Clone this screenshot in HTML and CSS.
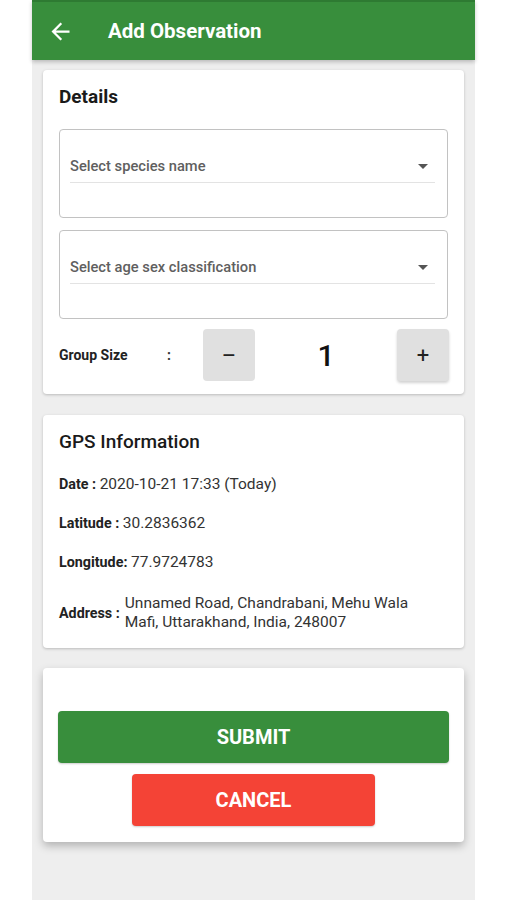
FILE: index.html
```html
<!DOCTYPE html>
<html lang="en">
<head>
<meta charset="utf-8">
<title>Add Observation</title>
<link rel="stylesheet" href="styles.css">
</head>
<body>
<div class="app">
  <header class="toolbar">
    <svg class="back" viewBox="0 0 24 24" width="27" height="27"><path fill="#fff" d="M20 11H7.83l5.59-5.59L12 4l-8 8 8 8 1.41-1.41L7.83 13H20v-2z"/></svg>
    <h1 class="title">Add Observation</h1>
  </header>
  <main class="content">
    <section class="card details">
      <h2 class="card-title">Details</h2>
      <div class="dropdown">
        <div class="select-row">
          <span class="placeholder">Select species name</span>
          <span class="caret"></span>
        </div>
      </div>
      <div class="dropdown second">
        <div class="select-row">
          <span class="placeholder">Select age sex classification</span>
          <span class="caret"></span>
        </div>
      </div>
      <div class="group-row">
        <span class="group-label">Group Size</span>
        <span class="group-colon">:</span>
        <button class="step minus">&#8211;</button>
        <span class="count">1</span>
        <button class="step plus">+</button>
      </div>
    </section>
    <section class="card gps">
      <h2 class="card-title gps-title">GPS Information</h2>
      <div class="info first"><b>Date : </b>2020-10-21 17:33 (Today)</div>
      <div class="info"><b>Latitude : </b>30.2836362</div>
      <div class="info"><b>Longitude: </b>77.9724783</div>
      <div class="info address">
        <b class="addr-label">Address :</b>
        <span class="addr-value">Unnamed Road, Chandrabani, Mehu Wala<br>Mafi, Uttarakhand, India, 248007</span>
      </div>
    </section>
    <section class="card actions">
      <button class="btn submit">SUBMIT</button>
      <button class="btn cancel">CANCEL</button>
    </section>
  </main>
</div>
</body>
</html>
```

FILE: styles.css
```css
html, body {
  margin: 0;
  padding: 0;
  background: #ffffff;
}
body {
  font-family: Roboto, "Liberation Sans", Arial, sans-serif;
  color: #212121;
}
.app {
  width: 443px;
  height: 900px;
  margin-left: 32px;
  background: #eeeeee;
  display: flex;
  flex-direction: column;
}
.toolbar {
  height: 60px;
  box-sizing: border-box;
  border-top: 2px solid #2e7a32;
  background: #388e3c;
  display: flex;
  align-items: center;
  padding-left: 15px;
  box-shadow: 0 2px 4px rgba(0,0,0,0.22);
  position: relative;
  z-index: 1;
}
.back {
  display: block;
}
.title {
  margin: 0 0 0 34px;
  font-size: 20.5px;
  font-weight: 700;
  color: #ffffff;
}
.content {
  padding: 10px 11px 0 11px;
  display: flex;
  flex-direction: column;
}
.card {
  background: #ffffff;
  border-radius: 4px;
  box-shadow: 0 1px 3px rgba(0,0,0,0.22);
  box-sizing: border-box;
}
.details {
  height: 324px;
  padding: 16px 16px 0 16px;
}
.card-title {
  margin: 0;
  font-size: 19px;
  line-height: 22px;
  font-weight: 700;
  color: #1a1a1a;
}
.dropdown {
  margin-top: 21px;
  height: 89px;
  box-sizing: border-box;
  border: 1px solid #c2c2c2;
  border-radius: 4px;
  padding: 25px 12px 0 10px;
}
.dropdown.second {
  margin-top: 12px;
}
.select-row {
  display: flex;
  align-items: center;
  justify-content: space-between;
  height: 22px;
  padding-bottom: 5px;
  border-bottom: 1px solid #e3e3e3;
}
.placeholder {
  font-size: 14.7px;
  font-weight: 500;
  color: #5f5f5f;
}
.caret {
  width: 0;
  height: 0;
  border-left: 5px solid transparent;
  border-right: 5px solid transparent;
  border-top: 5px solid #555555;
  margin-right: 7px;
  margin-top: 1px;
}
.group-row {
  margin-top: 10px;
  display: flex;
  align-items: center;
  height: 52px;
}
.group-label {
  width: 108px;
  font-size: 14px;
  font-weight: 700;
  color: #222222;
}
.group-colon {
  width: 36px;
  font-size: 14px;
  font-weight: 700;
  color: #333333;
}
.step {
  width: 52px;
  height: 52px;
  border: none;
  border-radius: 4px;
  background: #e0e0e0;
  font-family: Roboto, "Liberation Sans", Arial, sans-serif;
  font-size: 22px;
  color: #222222;
  padding: 0;
}
.plus {
  box-shadow: 0 2px 3px rgba(0,0,0,0.18);
  margin-right: -1px;
}
.count {
  flex: 1;
  text-align: center;
  font-size: 30px;
  font-weight: 500;
  color: #111111;
}
.gps {
  margin-top: 21px;
  height: 233px;
  padding: 16px 16px 0 16px;
}
.gps-title {
  font-weight: 500;
}
.info {
  margin-top: 19px;
  font-size: 15.5px;
  line-height: 20px;
  color: #333333;
}
.info b {
  font-size: 14.3px;
  font-weight: 700;
  color: #222222;
}
.info.first {
  margin-top: 21px;
}
.address {
  display: flex;
  align-items: center;
  margin-top: 22px;
}
.addr-label {
  margin-right: 5px;
}
.addr-value {
  line-height: 19px;
}
.actions {
  margin-top: 20px;
  height: 174px;
  padding: 43px 15px 0 15px;
  display: flex;
  flex-direction: column;
  align-items: center;
  box-shadow: 0 4px 8px rgba(0,0,0,0.25);
}
.btn {
  height: 52px;
  border: none;
  border-radius: 4px;
  color: #ffffff;
  font-family: Roboto, "Liberation Sans", Arial, sans-serif;
  font-size: 20px;
  font-weight: 700;
  box-shadow: 0 1px 2px rgba(0,0,0,0.2);
}
.submit {
  width: 391px;
  background: #388e3c;
}
.cancel {
  width: 243px;
  margin-top: 11px;
  background: #f44336;
}
```
